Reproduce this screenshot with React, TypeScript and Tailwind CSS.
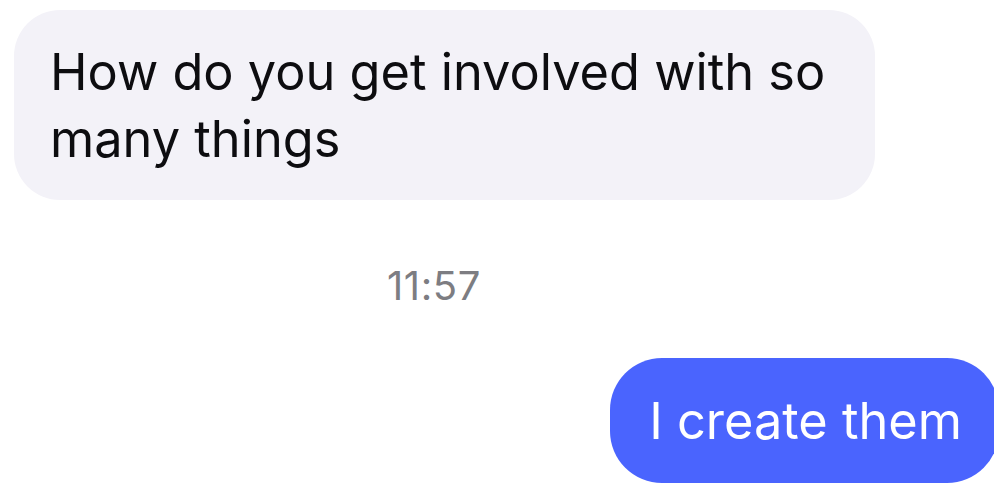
export default function App() {
  return (
    <div
      className="w-[994px] h-[492px] overflow-hidden bg-white"
      style={{ fontFamily: 'Inter, "Noto Sans", sans-serif' }}
    >
      <div className="pt-[10px] pl-[14px]">
        <div className="w-[861px] h-[190px] rounded-[46px] bg-[#f3f2f8] pl-[36px] pt-[28px] text-[50.5px] leading-[67px] text-[#0d0d10]">
          How do you get involved with so
          <br />
          many things
        </div>
      </div>

      <div className="mt-[63px] pl-[387px] text-[40px] leading-[46px] tracking-[0.6px] text-[#7d7d82]">11:57</div>

      <div className="mt-[49px] flex justify-end mr-[-5px]">
        <div className="h-[125px] rounded-[52px] bg-[#4a64fe] pl-[39px] pr-[37px] flex items-center text-[50.5px] leading-[67px] text-white">
          I create them
        </div>
      </div>
    </div>
  );
}
